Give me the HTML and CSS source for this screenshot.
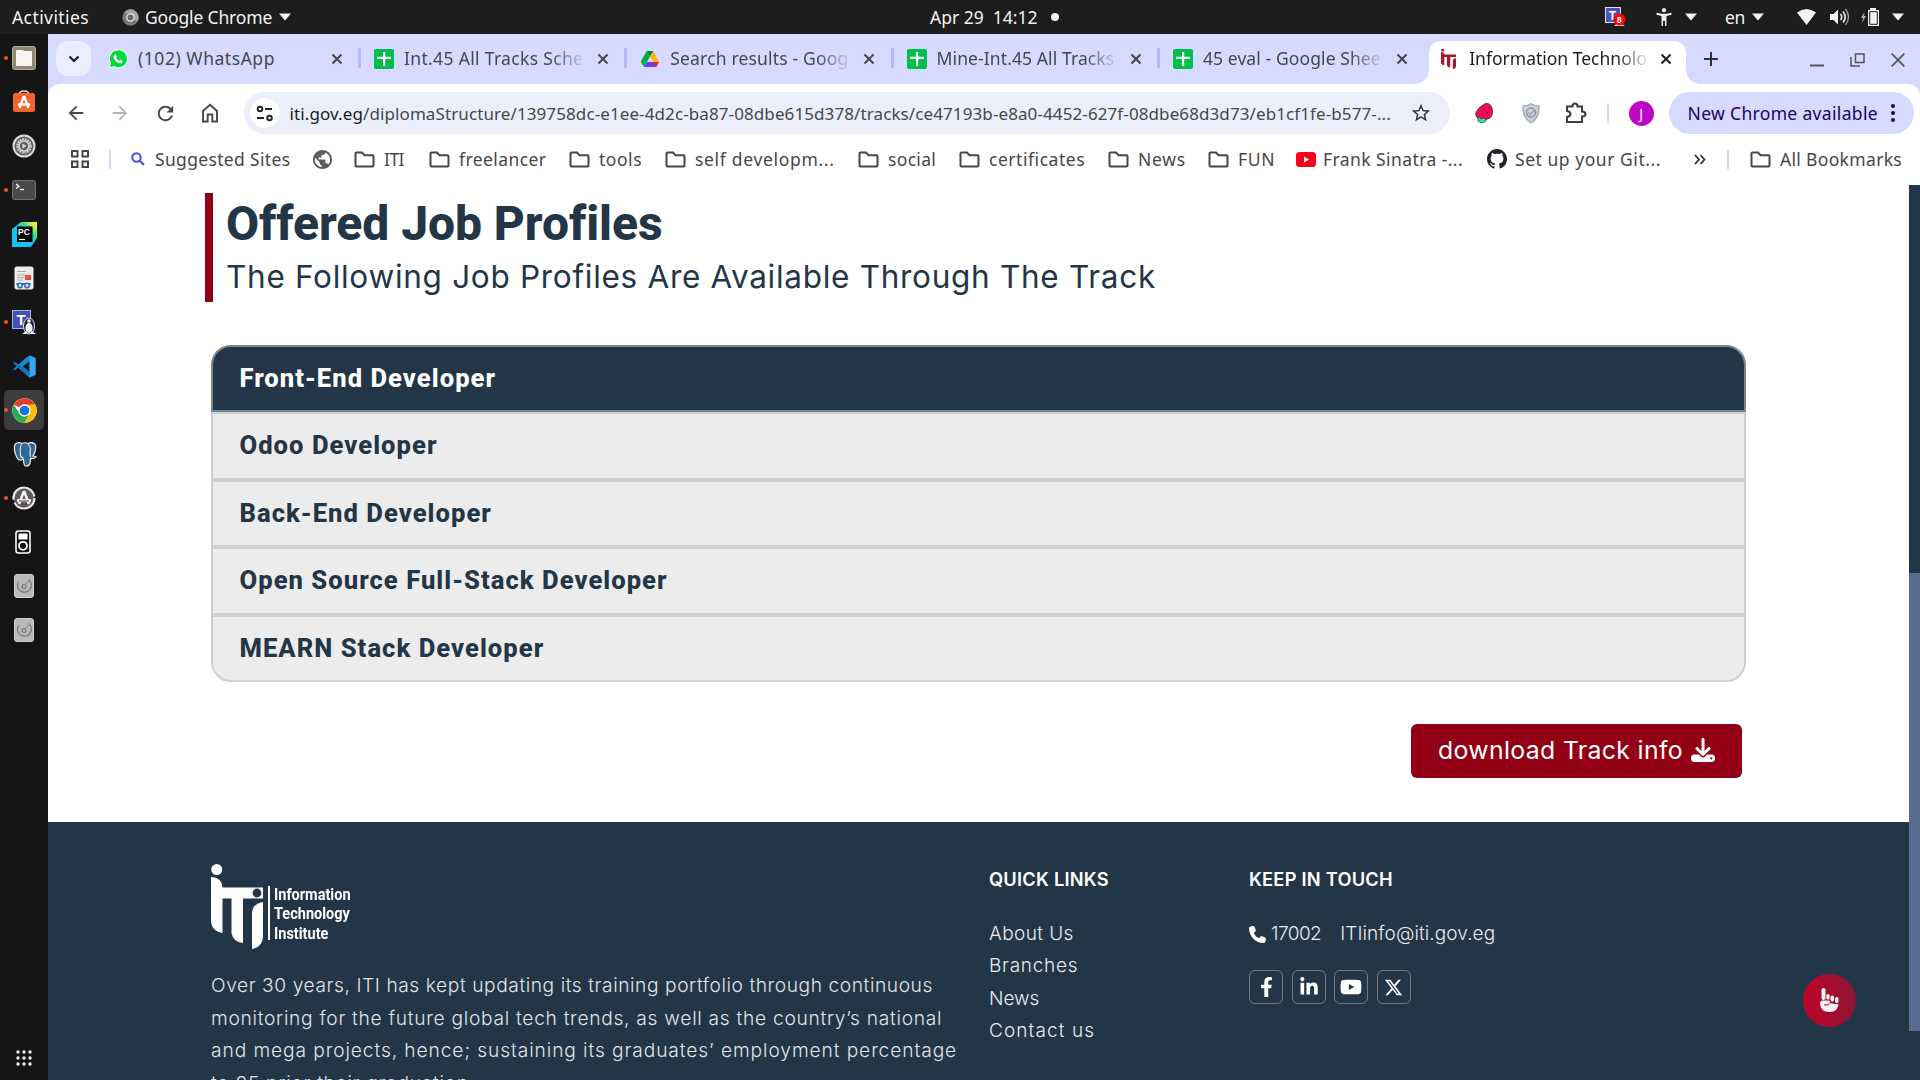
FILE: index.html
```html
<!DOCTYPE html>
<html lang="en">
<head>
<meta charset="utf-8">
<title>Information Technology Institute</title>
<link rel="stylesheet" href="styles.css">
</head>
<body>
<svg class="defs" aria-hidden="true">
  <symbol id="close" viewBox="0 0 12 12"><path d="M1.500 1.500l9 9M10.500 1.500l-9 9" stroke="currentColor" stroke-width="2" fill="none"/></symbol>
  <symbol id="sheet" viewBox="0 0 20 20"><rect width="20" height="20" rx="2" fill="#00bf4a"/><path d="M9 3h2.200v4.800H17V10h-5.800v7H9v-7H3V7.800h6z" fill="#fff"/></symbol>
  <symbol id="folder" viewBox="0 0 21 17"><path d="M2.500 1.500h5.500l2.500 2.700h8q1 0 1 1v9.300q0 1-1 1h-16q-1 0-1-1v-12q0-1 1-1z" fill="none" stroke="#474747" stroke-width="2"/></symbol>
  <symbol id="tri" viewBox="0 0 12 8"><path d="M0 .5h12L6 7.500z" fill="#f2f2f2"/></symbol>
  <symbol id="disk" viewBox="0 0 20 24"><rect x=".5" y=".5" width="19" height="23" rx="2.500" fill="#b9b9b9" stroke="#d0d0d0"/><path d="M4.500 7.500a7 7 0 1 0 10-2" fill="none" stroke="#777" stroke-width="1.200"/><circle cx="10" cy="12.500" r="2" fill="none" stroke="#777" stroke-width="1.200"/><path d="M11 11l4-4" stroke="#888"/></symbol>
</svg>

<header class="topbar">
  <span class="ls4">Activities</span>
  <span class="t-app"><svg width="17" height="17" viewBox="0 0 48 48"><circle cx="24" cy="24" r="23" fill="#777"/><path d="M24 1a23 23 0 0 1 20 34L34 30a11 11 0 0 0-10-17H6A23 23 0 0 1 24 1z" fill="#a5a5a5"/><circle cx="24" cy="24" r="12" fill="#eee"/><circle cx="24" cy="24" r="8.500" fill="#666"/></svg><b class="t-chrome">Google Chrome</b><svg width="12" height="8"><use href="#tri"/></svg></span>
  <span class="t-clock"><b>Apr 29&nbsp; 14:12</b><i></i></span>
  <span class="t-tray">
    <svg width="21" height="20" viewBox="0 0 21 20"><rect x=".5" y=".5" width="15" height="15" fill="#4b53bc" stroke="#dfe0f5"/><text x="3.800" y="12.500" class="glyph" font-size="12" fill="#fff">T</text><path d="M9 19l5-4 6 4z" fill="#ddd"/><circle cx="14.500" cy="12.500" r="6" fill="#f00"/><text x="11.800" y="16" class="glyph" font-size="9" fill="#fff">8</text></svg>
    <svg class="m-acc" width="16" height="18" viewBox="0 0 16 18"><circle cx="8" cy="2.200" r="2.100" fill="#eee"/><path d="M.5 4.800l5 1h5l5-1v2L10.500 8v10H9v-5H7v5H5.500V8L.5 6.800z" fill="#eee"/></svg>
    <svg class="m-tri1" width="12" height="8"><use href="#tri"/></svg>
    <b class="m-en">en</b>
    <svg class="m-tri2" width="12" height="8"><use href="#tri"/></svg>
    <svg class="m-wifi" width="19" height="16" viewBox="0 0 19 16"><path d="M0 3.500Q9.500-3.500 19 3.500L9.500 16z" fill="#f2f2f2"/></svg>
    <svg class="m-snd" width="20" height="18" viewBox="0 0 20 18"><path d="M0 6h3.500L8 1.500v15L3.500 12H0z" fill="#f2f2f2"/><path d="M10.500 6q2.500 3 0 6M13 3.500q4.500 5.500 0 11" stroke="#f2f2f2" stroke-width="1.600" fill="none"/><path d="M15.500 1q6 8 0 16" stroke="#999" stroke-width="1.400" fill="none"/></svg>
    <svg class="m-bat" width="19" height="18" viewBox="0 0 19 18"><path d="M3.500 4L0 10h2l-1 5 4-7H3z" fill="#aaa"/><path d="M9 2V0h6v2h3v16H7V2z" fill="#f2f2f2"/><path d="M8.700 3.700h7.600v12.600H8.700z" fill="none" stroke="#1d1d1d" stroke-width="1"/></svg>
    <svg class="m-tri3" width="12" height="8"><use href="#tri"/></svg>
  </span>
</header>

<div class="desktop">
  <nav class="dock">
    <span class="app run"><svg width="24" height="24" viewBox="0 0 24 24"><rect x=".5" y=".5" width="23" height="23" rx="2.500" fill="#8f8772" stroke="#b5ae9c"/><path d="M5 5h5.500l1.200 1H19v13H5z" fill="#f6f5f2" stroke="#f6f5f2" stroke-width="2" stroke-linejoin="round"/></svg></span>
    <span class="app"><svg width="24" height="24" viewBox="0 0 24 24"><path d="M7 5q0-4 5-4t5 4" fill="none" stroke="#e9dcc0" stroke-width="1.500"/><rect x="1" y="3" width="22" height="19" rx="2.500" fill="#f1642d"/><path d="M12 6L7.500 18M12 6l4.500 12M6 14.500h12" stroke="#fff" stroke-width="2.300" fill="none"/></svg></span>
    <span class="app"><svg width="24" height="24" viewBox="0 0 24 24"><circle cx="12" cy="12" r="10.500" fill="#606060" stroke="#dcdcdc" stroke-width="2"/><circle cx="12" cy="12" r="6.500" fill="none" stroke="#ccc" stroke-width="2.600" stroke-dasharray="1.800 .75"/><circle cx="12" cy="12" r="5" fill="none" stroke="#d5d5d5" stroke-width="1.600"/><path d="M10.500 9.500l4 2.500-4 2.500z" fill="#ddd"/></svg></span>
    <span class="app run"><svg width="24" height="20" viewBox="0 0 24 20"><rect x=".5" y=".5" width="23" height="19" rx="2" fill="#494949" stroke="#707070"/><path d="M4 4l3 2.200L4 8.400" stroke="#fff" stroke-width="1.300" fill="none"/><path d="M8 9.500h4" stroke="#fff" stroke-width="1.300"/></svg></span>
    <span class="app"><svg width="25" height="25" viewBox="0 0 25 25"><defs><linearGradient id="pc" x1="0" y1="1" x2="1" y2="0"><stop offset=".45" stop-color="#12c5f0"/><stop offset=".68" stop-color="#2bd99b"/><stop offset=".9" stop-color="#f3f03f"/></linearGradient></defs><path d="M0 7l9-7h16v16l-6 9H0z" fill="url(#pc)"/><path d="M5 4.500h15.500v15.500H5z" fill="#000"/><text x="6" y="13" class="glyph" font-size="8.500" fill="#fff">PC</text><path d="M7 17.500h6" stroke="#fff" stroke-width="1.200"/></svg></span>
    <span class="app"><svg width="20" height="24" viewBox="0 0 20 24"><rect x=".5" y=".5" width="19" height="23" rx="2" fill="#ececec"/><path d="M3 5.500h9M3 9h8M3 11.500h7M3 14h6" stroke="#aaa"/><path d="M11 9h6v5h-6z" fill="#e8503c"/><path d="M2.500 17h14v2h-14z" fill="#2f6eb5"/><circle cx="6" cy="19.500" r="2.200" fill="#dce8f4" stroke="#2f6eb5" stroke-width="1.600"/><circle cx="13" cy="19.500" r="2.200" fill="#dce8f4" stroke="#2f6eb5" stroke-width="1.600"/></svg></span>
    <span class="app run"><svg width="25" height="25" viewBox="0 0 25 25"><rect x=".5" y=".5" width="18" height="18" fill="#4650b4" stroke="#aab0e6"/><text x="4.500" y="15" class="glyph" font-size="15" fill="#fff">T</text><ellipse cx="17" cy="16" rx="5.500" ry="8" fill="#1e2140" stroke="#dfe0f0"/><ellipse cx="17" cy="18" rx="3.500" ry="5" fill="#fff"/><circle cx="17" cy="11" r="1.800" fill="#fff"/><path d="M10 24l4-3 2 3zM24 24l-4-3-2 3z" fill="#eee"/></svg></span>
    <span class="app"><svg width="23" height="23" viewBox="0 0 23 23"><path d="M16.500.5L22.500 3v17l-6 2.500L5 12.500 1.800 15.200 0 14.300l12.500-11z" fill="#1b86d0"/><path d="M1.800 6.800L0 8l16.500 14.500 2-4z" fill="#1272b8"/><path d="M16.500.5L22.500 3v17l-6 2.500z" fill="#34a7ee"/><path d="M16.300 6.500v10L9.800 11.500z" fill="#151515"/><path d="M0 9.500l3 2-3 2.500z" fill="#151515"/></svg></span>
    <span class="app run active"><svg width="25" height="25" viewBox="0 0 48 48"><circle cx="24" cy="24" r="23.500" fill="#fff"/><path d="M24 24L3.650 12.250A23.500 23.500 0 0 1 44.350 12.250z" fill="#e33b2e"/><path d="M3.650 12.250A23.500 23.500 0 0 0 24 47.500L34.200 29.900 24 24H10.400z" fill="#2da94f"/><path d="M44.350 12.250A23.500 23.500 0 0 1 24 47.500L34.200 29.900 24 12.250z" fill="#fdbd00"/><circle cx="24" cy="24" r="11.800" fill="#fff"/><circle cx="24" cy="24" r="9.300" fill="#1a73e8"/></svg></span>
    <span class="app"><svg width="25" height="25" viewBox="0 0 25 25"><path d="M3 2.500Q6-.5 10 1.500q3-1.500 6 0 5-2.500 7.500 1.500 1 5-2.500 11 2 0 3 .8-2 2.200-5.500 1.700l-.5 5q-1 3-4.500 2.500-2-.8-2-7-4 2.500-6-.5Q1 8 3 2.500z" fill="#336791" stroke="#e8eef3" stroke-width="1.200"/><path d="M9.500 2.500Q7.500 6 8.500 12q-.5 3 3 4M16 2q3.500 4 2 8 0 3 .5 5" fill="none" stroke="#e8eef3" stroke-width="1.100"/></svg></span>
    <span class="app run"><svg width="24" height="24" viewBox="0 0 24 24"><circle cx="12" cy="12" r="10.500" fill="#5b5b5b" stroke="#e8e8e8" stroke-width="2.200" stroke-dasharray="28 3 33 2"/><path d="M12 5L7 18M12 5l5 13" stroke="#fff" stroke-width="2.400"/><path d="M5 14.500h14" stroke="#fff" stroke-width="2.600"/><path d="M7 15h10" stroke="#8d4a8d" stroke-width="1.200"/></svg></span>
    <span class="app pod"><svg width="16" height="24" viewBox="0 0 16 24"><rect x="1" y="1" width="14" height="22" rx="2.500" fill="#111" stroke="#fff" stroke-width="1.600"/><path d="M3.500 3.500h9v6h-9z" fill="#fff"/><circle cx="8" cy="15.800" r="4" fill="none" stroke="#fff" stroke-width="1.800"/></svg></span>
    <span class="app"><svg width="20" height="24"><use href="#disk"/></svg></span>
    <span class="app"><svg width="20" height="24"><use href="#disk"/></svg></span>
    <span class="grid"><svg width="16" height="16" viewBox="0 0 16 16" fill="#eee"><circle cx="2" cy="2" r="1.700"/><circle cx="8" cy="2" r="1.700"/><circle cx="14" cy="2" r="1.700"/><circle cx="2" cy="8" r="1.700"/><circle cx="8" cy="8" r="1.700"/><circle cx="14" cy="8" r="1.700"/><circle cx="2" cy="14" r="1.700"/><circle cx="8" cy="14" r="1.700"/><circle cx="14" cy="14" r="1.700"/></svg></span>
  </nav>

  <div class="window">
    <div class="tabs">
      <span class="tabsearch"><svg width="12" height="8" viewBox="0 0 12 8"><path d="M1.500 1.500L6 6l4.500-4.500" fill="none" stroke="#1b1b1b" stroke-width="2.200"/></svg></span>
      <div class="tab first"><svg width="20" height="20" viewBox="0 0 20 20"><path d="M1 19l1.500-5A9 9 0 1 1 6 17.600z" fill="#00d93c" stroke="#fff"/><path d="M6.500 5.500q1-1 1.700.2l.7 1.600q.1.600-.8 1.500 1 2 3.200 3 .9-1.200 1.300-1l1.900 1q.6.300-.2 1.600-1.500 1.700-4.300.3Q6.700 12 5.700 9q-.5-2.200.8-3.500z" fill="#fff"/></svg><span class="title ls5">(102) WhatsApp</span><svg class="x" width="12" height="12"><use href="#close"/></svg></div>
      <div class="tab"><svg width="20" height="20"><use href="#sheet"/></svg><span class="title fade ls3">Int.45 All Tracks Sche</span><svg class="x" width="12" height="12"><use href="#close"/></svg></div>
      <div class="tab"><svg width="20" height="20" viewBox="0 0 20 20"><path d="M7 2h6l2.600 4.500-3 2L10 4.500 3.500 15.500 1 12z" fill="#00ac47"/><path d="M7 2h6l6 11h-6z" fill="#ffba00"/><path d="M7 2h6l-3 5.500z" fill="#00832d"/><path d="M7 2l3 5.500L4 18 1 13z" fill="#00ac47"/><path d="M4 18l3-5h12l-3 5z" fill="#6a3df0"/><path d="M13 13h6l-3 5z" fill="#f22"/></svg><span class="title fade ls2">Search results - Goog</span><svg class="x" width="12" height="12"><use href="#close"/></svg></div>
      <div class="tab"><svg width="20" height="20"><use href="#sheet"/></svg><span class="title fade ls1">Mine-Int.45 All Tracks</span><svg class="x" width="12" height="12"><use href="#close"/></svg></div>
      <div class="tab last"><svg width="20" height="20"><use href="#sheet"/></svg><span class="title fade ls1">45 eval - Google Shee</span><svg class="x" width="12" height="12"><use href="#close"/></svg></div>
      <div class="tab current"><svg width="15" height="20" viewBox="0 0 52 85" preserveAspectRatio="none"><path d="M0 5.500a6 5.500 0 0 1 12 0 6 5.500 0 0 1-12 0zM0 13q11 .5 11.500 10.500H52V34.500H32V79q-10-1-11.500-10V34.500H11.500V69Q0 67 0 56zM52 38v35q-.5 10-11 12V49q.5-9 11-11z" fill="#a8152c"/></svg><span class="title fade">Information Technolo</span><svg class="x" width="12" height="12"><use href="#close"/></svg></div>
      <svg class="plus" width="14" height="14" viewBox="0 0 14 14"><path d="M7 0v14M0 7h14" stroke="#333" stroke-width="2"/></svg>
      <span class="winctl"><svg width="14" height="14" viewBox="0 0 14 14"><path d="M0 12.500h14" stroke="#555" stroke-width="2"/></svg><svg width="15" height="14" viewBox="0 0 15 14"><path d="M5.500 1h8.500v8.500H5.500zM1 4v9h9" fill="none" stroke="#555" stroke-width="1.500"/></svg><svg width="14" height="14" viewBox="0 0 14 14"><path d="M.7.700l12.600 12.600M13.300.700L.7 13.300" stroke="#555" stroke-width="1.700"/></svg></span>
    </div>

    <div class="toolbar">
      <svg class="nav" width="22" height="22" viewBox="0 0 24 24"><path d="M20 11H7.830l5.590-5.590L12 4l-8 8 8 8 1.410-1.410L7.830 13H20v-2z" fill="#474747"/></svg>
      <svg class="nav" width="22" height="22" viewBox="0 0 24 24"><path d="M4 11h12.170l-5.590-5.590L12 4l8 8-8 8-1.410-1.410L16.170 13H4z" fill="#b3b3b3"/></svg>
      <svg class="nav" width="23" height="23" viewBox="0 0 24 24"><path d="M17.650 6.350C16.200 4.900 14.210 4 12 4c-4.420 0-7.990 3.580-7.990 8s3.570 8 7.990 8c3.730 0 6.840-2.550 7.730-6h-2.080c-.82 2.330-3.040 4-5.650 4-3.310 0-6-2.690-6-6s2.690-6 6-6c1.660 0 3.140.69 4.220 1.780L13 11h7V4l-2.350 2.350z" fill="#474747"/></svg>
      <svg class="nav" width="22" height="22" viewBox="0 0 22 22"><path d="M4 9l7-6.300L18 9v10.500h-4.700v-7H8.700v7H4z" fill="none" stroke="#474747" stroke-width="1.900"/></svg>
      <div class="omnibox">
        <span class="site"><svg width="17" height="17" viewBox="0 0 17 17" fill="none" stroke="#222" stroke-width="1.900"><circle cx="4" cy="4" r="2.300"/><path d="M9 4h7M1 13h7"/><circle cx="13.500" cy="13" r="2.300"/></svg></span>
        <span class="url ls1"><em>iti.gov.eg</em>/diplomaStructure/139758dc-e1ee-4d2c-ba87-08dbe615d378/tracks/ce47193b-e8a0-4452-627f-08dbe68d3d73/eb1cf1fe-b577-...</span>
        <svg width="22" height="22" viewBox="0 0 24 24"><path d="M22 9.240l-7.190-.62L12 2 9.190 8.630 2 9.240l5.460 4.730L5.820 21 12 17.270 18.180 21l-1.630-7.030L22 9.240zM12 15.400l-3.760 2.270 1-4.280-3.320-2.880 4.380-.38L12 6.100l1.710 4.040 4.380.38-3.320 2.880 1 4.280L12 15.400z" fill="#333"/></svg>
      </div>
      <div class="ext">
        <svg width="18" height="20" viewBox="0 0 18 20"><path d="M10 .7Q15-.5 17 5q1.500 7-2 10-6 3.500-11 1-5-3-2.500-7.500Q4 4 10 .7z" fill="#ef0b5b" stroke="#3a2029" stroke-width=".8"/><path d="M3 14l3 1.500 4-.5 1 3-4 2-4-2z" fill="#46d6a0" stroke="#23523f" stroke-width=".8"/><path d="M9 6v1.500M12 9v1.500M7 10v1.500M14 5v1.500" stroke="#7c0731"/></svg>
        <svg width="18" height="21" viewBox="0 0 18 21"><path d="M9 .7Q13 3 17 3q.5 12-8 17Q.5 15 1 3q4 0 8-2.300z" fill="#ced0de" stroke="#a2a6b5" stroke-width="1.300"/><circle cx="9" cy="9.500" r="4.500" fill="none" stroke="#8f94a8" stroke-width="1.500"/><path d="M6.500 9.500l2 2 4.500-5" stroke="#9ba0b2" stroke-width="1.500" fill="none"/></svg>
        <svg width="22" height="22" viewBox="0 0 22 22"><path d="M2 4.500h5.500q0-3 2.500-3t2.500 3H17v5q3.500 0 3.500 2.500T17 14.500V20H2v-5q3.500-.5 3.500-3T2 9z" fill="none" stroke="#3d3d3d" stroke-width="2"/></svg>
        <i class="sep"></i>
        <span class="avatar">J</span>
      </div>
      <div class="update"><span class="ls3">New Chrome available</span><svg width="4" height="18" viewBox="0 0 4 18" fill="#1b0068"><circle cx="2" cy="2" r="2"/><circle cx="2" cy="9" r="2"/><circle cx="2" cy="16" r="2"/></svg></div>
    </div>

    <div class="bookmarks">
      <span><svg width="18" height="18" viewBox="0 0 18 18" fill="none" stroke="#474747" stroke-width="2"><path d="M1 1h5.500v5.500H1zM11.500 1H17v5.500h-5.500zM1 11.500h5.500V17H1zM11.500 11.500H17V17h-5.500z"/></svg></span>
      <i class="sep"></i>
      <span class="sug"><svg width="14" height="14" viewBox="0 0 14 14"><circle cx="5.500" cy="5.500" r="4.200" fill="none" stroke="#474fd0" stroke-width="2"/><path d="M8.500 8.500L13 13" stroke="#474fd0" stroke-width="2.200"/></svg><b class="ls3">Suggested Sites</b></span>
      <span><svg width="21" height="21" viewBox="1 1 22 22"><path d="M12 2C6.480 2 2 6.480 2 12s4.480 10 10 10 10-4.480 10-10S17.520 2 12 2zm-1 17.930c-3.950-.49-7-3.850-7-7.930 0-.62.080-1.210.210-1.790L9 15v1c0 1.100.9 2 2 2v1.930zm6.900-2.540c-.26-.81-1-1.390-1.900-1.390h-1v-3c0-.55-.45-1-1-1H8v-2h2c.55 0 1-.45 1-1V7h2c1.100 0 2-.9 2-2v-.41c2.930 1.190 5 4.060 5 7.410 0 2.080-.8 3.970-2.100 5.390z" fill="#5a5d62"/></svg></span>
      <span><svg width="21" height="17"><use href="#folder"/></svg><b class="tight">ITI</b></span>
      <span><svg width="21" height="17"><use href="#folder"/></svg><b class="ls4">freelancer</b></span>
      <span><svg width="21" height="17"><use href="#folder"/></svg><b class="ls5">tools</b></span>
      <span><svg width="21" height="17"><use href="#folder"/></svg><b class="ls6">self developm...</b></span>
      <span><svg width="21" height="17"><use href="#folder"/></svg><b class="ls3">social</b></span>
      <span><svg width="21" height="17"><use href="#folder"/></svg><b class="ls5">certificates</b></span>
      <span><svg width="21" height="17"><use href="#folder"/></svg><b class="ls7">News</b></span>
      <span><svg width="21" height="17"><use href="#folder"/></svg><b class="ls6">FUN</b></span>
      <span class="yt"><svg width="20" height="15" viewBox="0 0 20 15"><rect width="20" height="15" rx="3.500" fill="#f5001d"/><path d="M8 4.500l5 3-5 3z" fill="#fff"/></svg><b class="ls4">Frank Sinatra -...</b></span>
      <span class="git"><svg width="20" height="20" viewBox="0 0 16 16"><path d="M8 0C3.580 0 0 3.580 0 8c0 3.540 2.290 6.530 5.470 7.590.4.070.55-.17.55-.38 0-.19-.01-.82-.01-1.490-2.010.37-2.530-.49-2.690-.94-.09-.23-.48-.94-.82-1.130-.28-.15-.68-.52-.01-.53.63-.01 1.080.58 1.230.82.72 1.210 1.870.87 2.330.66.070-.52.28-.87.51-1.070-1.780-.2-3.640-.89-3.640-3.950 0-.87.31-1.590.82-2.150-.08-.2-.36-1.020.08-2.120 0 0 .67-.21 2.200.82.64-.18 1.320-.27 2-.27s1.360.09 2 .27c1.530-1.040 2.200-.82 2.200-.82.44 1.100.16 1.920.08 2.120.51.56.82 1.270.82 2.150 0 3.070-1.870 3.750-3.650 3.950.29.25.54.73.54 1.480 0 1.070-.01 1.930-.01 2.200 0 .21.15.46.55.38A8.010 8.010 0 0 0 16 8c0-4.420-3.580-8-8-8z" fill="#20242a"/></svg><b class="ls5">Set up your Git...</b></span>
      <span><svg width="12" height="11" viewBox="0 0 12 11"><path d="M1 1l4 4.500L1 10M6.500 1l4 4.500-4 4.500" fill="none" stroke="#333" stroke-width="1.800"/></svg></span>
      <i class="sep"></i>
      <span><svg width="21" height="17"><use href="#folder"/></svg><b class="ls3">All Bookmarks</b></span>
    </div>

    <div class="view">
      <main class="page">
        <section class="profiles">
          <div class="heading">
            <h1>Offered Job Profiles</h1>
            <p>The Following Job Profiles Are Available Through The Track</p>
          </div>
          <ul class="accordion">
            <li class="open">Front-End Developer</li>
            <li>Odoo Developer</li>
            <li>Back-End Developer</li>
            <li>Open Source Full-Stack Developer</li>
            <li>MEARN Stack Developer</li>
          </ul>
          <a class="download">download Track info<svg width="24" height="24" viewBox="0 0 512 512"><path d="M288 32c0-17.700-14.300-32-32-32s-32 14.300-32 32V274.700l-73.400-73.400c-12.500-12.500-32.800-12.500-45.300 0s-12.500 32.800 0 45.300l128 128c12.500 12.500 32.800 12.500 45.300 0l128-128c12.500-12.500 12.500-32.800 0-45.300s-32.800-12.500-45.300 0L288 274.700V32zM64 352c-35.300 0-64 28.700-64 64v32c0 35.300 28.700 64 64 64H448c35.300 0 64-28.700 64-64V416c0-35.300-28.700-64-64-64H346.500l-45.300 45.300c-25 25-65.500 25-90.500 0L165.500 352H64zm368 56a24 24 0 1 1 0 48 24 24 0 1 1 0-48z" fill="#fff"/></svg></a>
        </section>
        <footer class="footer">
          <div class="about">
            <div class="logo">
              <svg width="52" height="85" viewBox="0 0 52 85" fill="#fff"><circle cx="5.800" cy="5.500" r="5.500"/><path d="M0 13q11 .5 11.500 10.500H52V34.500H32V79q-10-1-11.500-10V34.500H11.500V69Q0 67 0 56z"/><path d="M52 38v35q-.5 10-11 12V49q.5-9 11-11z"/><circle cx="46" cy="29" r="4.400" fill="#233648"/></svg>
              <i></i>
              <span class="lname"><b>Information</b><b>Technology</b><b>Institute</b></span>
            </div>
            <p>Over 30 years, ITI has kept updating its training portfolio through continuous<br><span class="l2">monitoring for the future global tech trends, as well as the country’s national</span><br><span class="l3">and mega projects, hence; sustaining its graduates’ employment percentage</span><br><span class="l2">to 85 prior their graduation.</span></p>
          </div>
          <div class="links">
            <h2>QUICK LINKS</h2>
            <a class="ls4">About Us</a><a class="ls7">Branches</a><a>News</a><a class="ls10">Contact us</a>
          </div>
          <div class="touch">
            <h2>KEEP IN TOUCH</h2>
            <div class="contact"><svg width="17" height="17" viewBox="0 0 512 512"><path d="M164.900 24.600c-7.700-18.600-28-28.500-47.400-23.200l-88 24C12.100 30.200 0 46 0 64C0 311.400 200.600 512 448 512c18 0 33.800-12.100 38.600-29.500l24-88c5.300-19.400-4.600-39.700-23.200-47.400l-96-40c-16.300-6.800-35.200-2.100-46.300 11.600L304.700 368C234.300 334.700 177.300 277.700 144 207.300L193.300 167c13.700-11.200 18.400-30 11.600-46.300l-40-96z" fill="#fff"/></svg><a class="tight">17002</a><a class="mail ls1">ITIinfo@iti.gov.eg</a></div>
            <div class="social">
              <span><svg width="13" height="20" viewBox="0 0 320 512"><path d="M279.140 288l14.220-92.660h-88.910v-60.130c0-25.350 12.420-50.060 52.240-50.060h40.420V6.260S260.430 0 225.360 0c-73.220 0-121.080 44.380-121.080 124.720v70.620H22.890V288h81.390v224h100.170V288z"/></svg></span>
              <span><svg width="18" height="20" viewBox="0 0 448 512"><path d="M100.280 448H7.400V148.900h92.880zM53.790 108.100C24.090 108.100 0 83.500 0 53.800a53.790 53.790 0 0 1 107.580 0c0 29.700-24.100 54.300-53.790 54.300zM447.900 448h-92.680V302.400c0-34.700-.7-79.200-48.290-79.200-48.290 0-55.690 37.700-55.690 76.700V448h-92.780V148.900h89.080v40.800h1.300c12.400-23.500 42.690-48.300 87.880-48.300 94 0 111.280 61.900 111.280 142.300V448z"/></svg></span>
              <span><svg width="22" height="20" viewBox="0 0 576 512"><path d="M549.655 124.083c-6.281-23.650-24.787-42.276-48.284-48.597C458.781 64 288 64 288 64S117.220 64 74.629 75.486c-23.497 6.322-42.003 24.947-48.284 48.597-11.412 42.867-11.412 132.305-11.412 132.305s0 89.438 11.412 132.305c6.281 23.650 24.787 41.500 48.284 47.821C117.220 448 288 448 288 448s170.780 0 213.371-11.486c23.497-6.321 42.003-24.171 48.284-47.821 11.412-42.867 11.412-132.305 11.412-132.305s0-89.438-11.412-132.305zm-317.510 213.508V175.185l142.739 81.205-142.739 81.201z"/></svg></span>
              <span><svg width="19" height="19" viewBox="0 0 512 512"><path d="M389.200 48h70.600L305.600 224.200 487 464H345L233.700 318.600 106.500 464H35.800L200.700 275.500 26.800 48H172.400L272.900 180.900 389.200 48zM364.400 421.800h39.100L151.100 88h-42L364.400 421.800z"/></svg></span>
            </div>
          </div>
        </footer>
        <span class="fab"><svg width="19" height="24" viewBox="0 0 19 24" fill="#f6f2f4"><rect x="1.500" y="0" width="4" height="12" rx="2"/><rect x="6.300" y="6" width="3.300" height="5.500" rx="1.600"/><rect x="10.500" y="7.500" width="3.500" height="6" rx="1.700"/><rect x="15" y="9" width="3.500" height="6" rx="1.700"/><path d="M3 12.500h5.500q2 .3 1.500 2.500l5 1q3 .5 3.500-.5-.3 8.500-9 8.500Q.3 24 0 15.500q.3-2.800 3-3z"/><path d="M4 16.800h3.500q1.800 0 2.500-1.500" stroke="#a80b30" fill="none"/></svg></span>
      </main>
      <div class="scroll"><i></i></div>
    </div>
  </div>
</div>
</body>
</html>
```
FILE: styles.css
```css
* { box-sizing: border-box; }
body { margin: 0; width: 1920px; height: 1080px; overflow: hidden; display: flex; flex-direction: column; background: #151515; font-family: "Noto Sans", sans-serif; }
svg { display: block; flex: none; }
b { font-weight: 400; }
.defs { position: absolute; width: 0; height: 0; }
.glyph { font-family: "Liberation Sans", sans-serif; font-weight: 700; }

.ls1 { letter-spacing: .1px; }
.ls2 { letter-spacing: .17px; }
.ls3 { letter-spacing: .33px; }
.ls4 { letter-spacing: .42px; }
.ls5 { letter-spacing: .54px; }
.ls6 { letter-spacing: .68px; }
.ls7 { letter-spacing: .73px; }
.ls10 { letter-spacing: 1.100px; }
.tight { letter-spacing: -.55px; }

.topbar { height: 34px; flex: none; background: #1d1d1d; color: #f2f2f2; font-size: 17.500px; line-height: 34px; white-space: nowrap; display: grid; grid-template-columns: 110px 808px 675px auto; padding-left: 12px; }
.t-app, .t-clock, .t-tray { display: flex; align-items: center; }
.t-chrome { margin: 0 7px 0 6px; letter-spacing: -.16px; }
.t-clock i { width: 8px; height: 8px; border-radius: 50%; background: #f2f2f2; margin-left: 13px; }
.m-acc { margin-left: 30px; }
.m-tri1 { margin-left: 13px; }
.m-en { margin-left: 28px; width: 21px; letter-spacing: -.3px; }
.m-tri2 { margin-left: 6px; }
.m-wifi { margin-left: 33px; }
.m-snd { margin-left: 14px; }
.m-bat { margin-left: 11px; }
.m-tri3 { margin-left: 12px; }

.desktop { flex: 1; display: flex; min-height: 0; }
.dock { width: 48px; flex: none; background: #151515; display: flex; flex-direction: column; align-items: center; padding-top: 4px; }
.app { width: 40px; height: 40px; margin-bottom: 4px; border-radius: 5px; display: flex; align-items: center; justify-content: center; position: relative; }
.app.active { background: #3d3d3d; }
.app.run::before { content: ""; position: absolute; left: 0; top: 18px; width: 4px; height: 4px; border-radius: 50%; background: #e95420; }
.app.pod { padding-right: 3px; }
.grid { margin-top: auto; padding-bottom: 14px; }

.window { flex: 1; min-width: 0; display: flex; flex-direction: column; background: #d7daff; }
.tabs { height: 50px; flex: none; display: flex; align-items: center; padding-left: 8px; color: #46464c; font-size: 17.500px; }
.tabsearch { width: 35px; height: 35px; margin-top: -1px; border-radius: 12px; background: #eceeff; display: flex; align-items: center; justify-content: center; }
.tab { width: 266.300px; height: 43px; padding-left: 13px; display: flex; align-items: center; position: relative; white-space: nowrap; flex: none; margin-top: -1px; }
.tab::after { content: ""; position: absolute; right: 0; top: 11px; width: 3px; height: 20px; background: #b3b6ff; border-radius: 1px; }
.tab.first { width: 270px; padding-left: 17px; }
.tab.last::after, .tab.current::after { display: none; }
.title { width: 179px; margin-left: 10px; padding-bottom: 2px; overflow: hidden; }
.first .title { margin-left: 10px; }
.fade { -webkit-mask-image: linear-gradient(90deg, #000 82%, rgba(0,0,0,.1)); mask-image: linear-gradient(90deg, #000 82%, rgba(0,0,0,.1)); }
.x { margin-left: 14px; }
.tab.current { width: 257px; height: 43px; margin: 7px 0 0 3px; padding: 0 0 7px 12px; background: #fff; border-radius: 12px 12px 0 0; color: #1e1e1e; }
.current .title { margin-left: 13px; }
.current .x { margin-left: 12px; }
.current::before { content: ""; position: absolute; left: -14px; right: -14px; bottom: 0; height: 14px; background: radial-gradient(circle at 0 0, transparent 13.500px, #fff 14px) left / 14px 14px no-repeat, radial-gradient(circle at 100% 0, transparent 13.500px, #fff 14px) right / 14px 14px no-repeat; }
.plus { margin-left: 18px; }
.winctl { display: flex; align-items: center; margin-left: 92px; gap: 26px; padding-top: 2px; }

.toolbar { height: 58px; flex: none; background: #fff; border-radius: 12px 12px 0 0; display: flex; align-items: center; padding-left: 17px; }
.nav { margin-right: 22.400px; }
.omnibox { width: 1206px; height: 42px; border-radius: 21px; background: #eceefb; display: flex; align-items: center; padding-left: 6px; }
.site { width: 30px; height: 30px; border-radius: 50%; background: #fff; display: flex; align-items: center; justify-content: center; }
.url { width: 1120px; margin-left: 10px; font-size: 17px; color: #474747; white-space: nowrap; }
.url em { font-style: normal; color: #1b1b1b; }
.ext { display: grid; grid-template-columns: 47px 43px 42px 22px auto; align-items: center; margin-left: 25px; }
.sep { width: 2px; height: 19px; background: #d3d7fb; }
.avatar { width: 25px; height: 25px; border-radius: 50%; background: #bf06c6; color: #fff; font-size: 14px; line-height: 25px; text-align: center; }
.update { margin-left: 15px; width: 245px; height: 42px; border-radius: 21px; background: #d7daff; color: #1b0068; font-size: 17.500px; white-space: nowrap; display: flex; align-items: center; justify-content: space-between; padding: 0 19px; }

.bookmarks { height: 43px; flex: none; background: #fff; display: grid; grid-template-columns: 38px 22px 181px 42px 75px 140px 96px 193px 101px 149px 100px 88px 191px 207px 33px 23px auto; align-items: center; padding: 0 0 9px 23px; color: #474747; font-size: 17.500px; white-space: nowrap; }
.bookmarks span { display: flex; align-items: center; gap: 9px; }
.bookmarks b { padding-bottom: 1px; }
.bookmarks .sug { gap: 10px; }
.bookmarks .yt { gap: 7px; }
.bookmarks .git { gap: 8px; }

.view { flex: 1; min-height: 0; display: flex; background: #fff; }
.page { width: 1861px; height: 895px; overflow: hidden; display: flex; flex-direction: column; position: relative; color: #233648; font-family: Inter, sans-serif; }
.profiles { height: 637px; flex: none; padding: 8px 164px 0 157px; display: flex; flex-direction: column; }
.heading { height: 109px; border-left: 8px solid #930015; padding-left: 13px; white-space: nowrap; }
.heading h1 { margin: 6px 0 0; font: 800 48px/50px Roboto, sans-serif; letter-spacing: -.06px; }
.heading p { margin: 7px 0 0; font-size: 31.500px; line-height: 42px; letter-spacing: .71px; }
.accordion { list-style: none; margin: 43px 0 0 6px; padding: 0; width: 1535px; }
.accordion li { height: 67.600px; border: 2px solid #cfcfcf; background: #ececec; padding: 0 26px 0 26.500px; font: 800 25.600px/62px Roboto, sans-serif; letter-spacing: 1.030px; }
.accordion li.open { height: 67px; background: #233648; border-color: #7c868f; color: #fff; border-radius: 20px 20px 0 0; }
.accordion li:last-child { border-radius: 0 0 20px 20px; }
.download { align-self: flex-end; width: 331px; height: 54px; margin: 42px 3px 0 0; padding: 0 27px 2px; background: #930015; border-radius: 6px; color: #fff; font-size: 24.800px; letter-spacing: .35px; display: flex; align-items: center; justify-content: space-between; white-space: nowrap; }
.footer { flex: 1; background: #233648; color: #fff; display: grid; grid-template-columns: 778px 260px auto; padding: 42px 0 0 163px; white-space: nowrap; }
.logo { display: flex; height: 85px; }
.logo i { width: 2px; height: 54px; background: #fff; margin: 22px 4px 0 5px; }
.lname { font: 16.500px/19.600px Roboto, sans-serif; padding-top: 20.500px; }
.lname b { display: block; font-weight: 700; width: max-content; transform: scaleX(.88); transform-origin: left; }
.about p { margin: 20px 0 0; font-size: 19.200px; line-height: 32.600px; font-weight: 300; color: #e0e3e6; letter-spacing: .570px; }
.about .l2 { letter-spacing: .71px; }
.about .l3 { letter-spacing: .9px; }
.footer h2 { margin: 0 0 25px; padding-top: 2px; font-size: 18.300px; line-height: 27px; font-weight: 600; letter-spacing: .22px; }
.footer a { display: block; font-size: 19px; line-height: 32.400px; font-weight: 300; color: #e8ebed; }
.contact { display: flex; align-items: center; gap: 5px; }
.contact .mail { margin-left: 14px; }
.social { display: flex; gap: 8.500px; margin-top: 20px; }
.social span { width: 34px; height: 34px; border: 1px solid #77797c; border-radius: 6px; display: flex; align-items: center; justify-content: center; }
.social svg { fill: #fff; }
.fab { position: absolute; left: 1755px; top: 789px; width: 53px; height: 53px; border-radius: 50%; background: linear-gradient(90deg, #bd0429, #8e1436); display: flex; align-items: center; justify-content: center; padding-bottom: 2px; }
.scroll { width: 11px; height: 895px; background: #233648; padding-top: 388px; }
.scroll i { display: block; height: 458px; background: #596b8e; }
```
